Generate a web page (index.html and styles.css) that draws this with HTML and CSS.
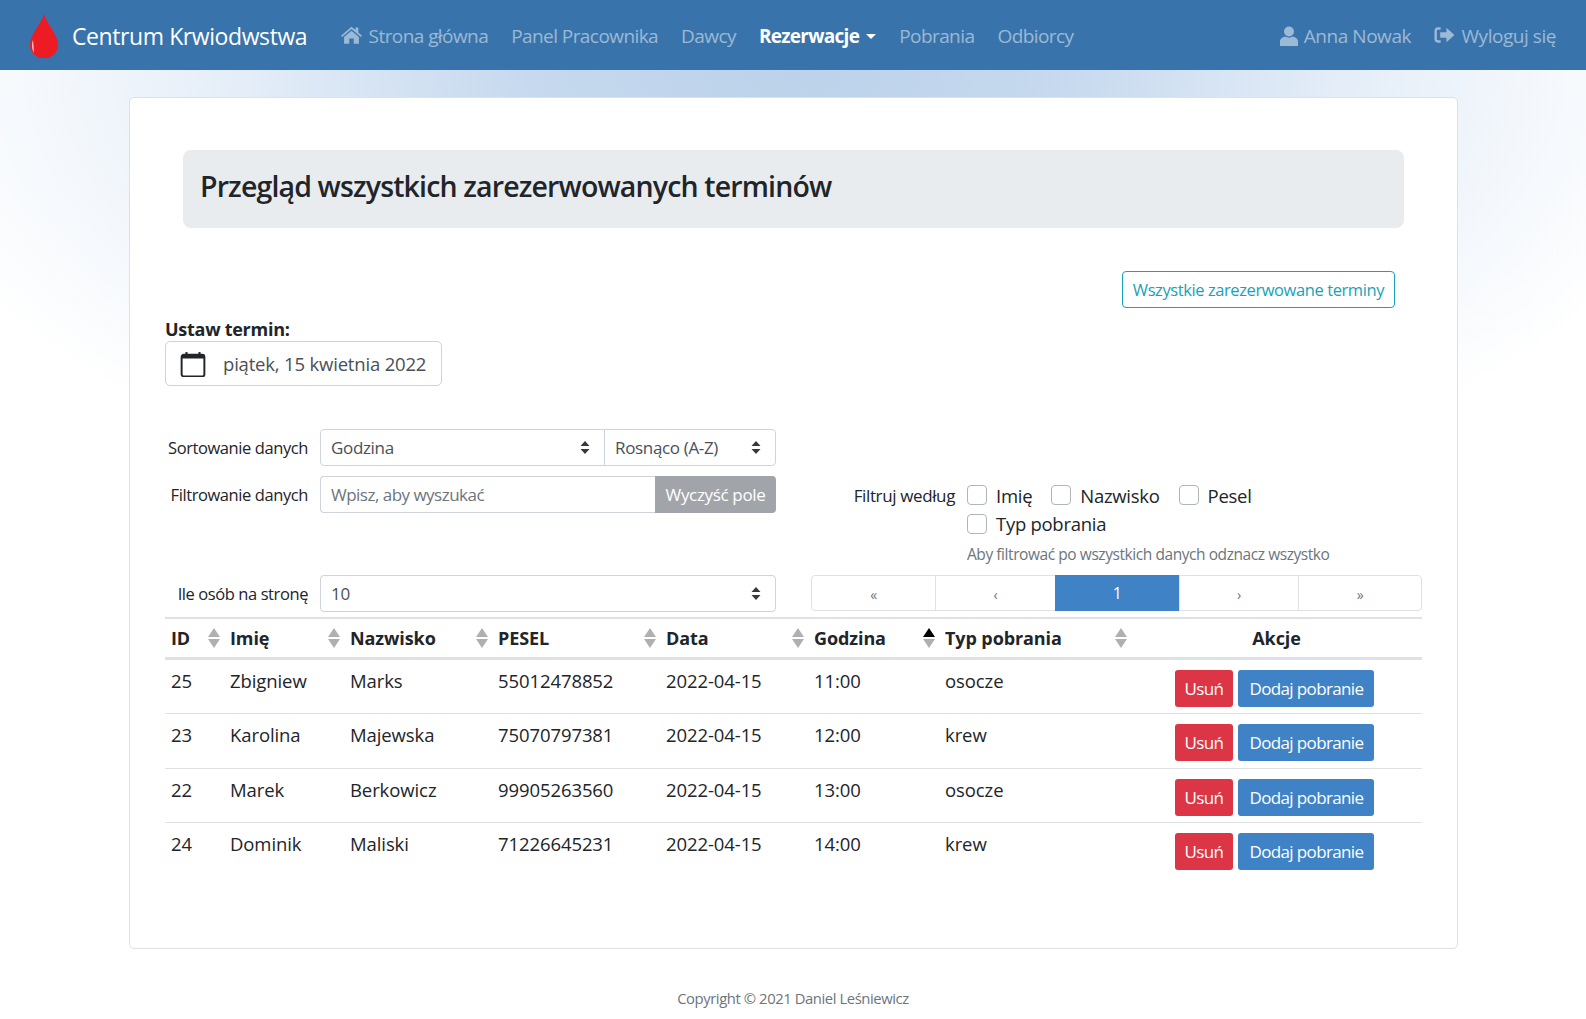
FILE: index.html
```html
<!DOCTYPE html>
<html lang="pl">
<head>
<meta charset="utf-8">
<title>Centrum Krwiodawstwa</title>
<link rel="stylesheet" href="styles.css">
</head>
<body>
<nav class="navbar">
  <a class="brand">
    <svg class="drop" viewBox="0 0 28 44"><path d="M14 0C16 9 28 20 28 31A14 13.500 0 0 1 0 31C0 20 12 9 14 0Z" fill="#ed1c24"/><path d="M3 26C1.500 30 2 36 4 38.500C3.500 34 3.500 30 3 26Z" fill="#fbd0d0"/></svg>
    <span>Centrum Krwiodwstwa</span>
  </a>
  <ul class="nav-links">
    <li><svg class="ico" viewBox="0 0 24 20"><path d="M12 0.500L0 10.800 1.300 12.300 12 3.200 22.700 12.300 24 10.800 19.800 7.200V1.500H16.500V4.400ZM12 5 3.500 12.200V20H9.500V14H14.500V20H20.500V12.200Z"/></svg> Strona główna</li>
    <li>Panel Pracownika</li>
    <li>Dawcy</li>
    <li class="active">Rezerwacje<i class="caret"></i></li>
    <li>Pobrania</li>
    <li>Odbiorcy</li>
  </ul>
  <ul class="nav-links nav-right">
    <li><svg class="ico user" viewBox="0 0 18 20"><circle cx="9" cy="5.500" r="5"/><path d="M0 20V15.500C0 12.500 3 11 5.500 10.500 7.500 12 10.500 12 12.500 10.500 15 11 18 12.500 18 15.500V20Z"/></svg> Anna Nowak</li>
    <li><svg class="ico" viewBox="0 0 22 18"><path d="M7 1H4C1.800 1 0.500 2.500 0.500 4.500V13.500C0.500 15.500 1.800 17 4 17H7V14.500H4.200C3.500 14.500 3 14 3 13.300V4.700C3 4 3.500 3.500 4.200 3.500H7Z"/><path d="M13 1.500 21.500 9 13 16.500V12H6.500V6H13Z"/></svg> Wyloguj się</li>
  </ul>
</nav>
<main class="main">
  <section class="card">
    <header class="jumbotron"><h2>Przegląd wszystkich zarezerwowanych terminów</h2></header>
    <div class="all-row"><a class="btn-outline">Wszystkie zarezerwowane terminy</a></div>
    <div class="date-block">
      <label class="date-label">Ustaw termin:</label>
      <div class="date-box">
        <svg class="cal" viewBox="0 0 24 24"><path d="M1.500 5.500A2 2 0 0 1 3.500 3.500H20.500A2 2 0 0 1 22.500 5.500V21.500A2 2 0 0 1 20.500 23.500H3.500A2 2 0 0 1 1.500 21.500Z" fill="none" stroke="#212529" stroke-width="1.800"/><path d="M1.500 5.500A2 2 0 0 1 3.500 3.500H20.500A2 2 0 0 1 22.500 5.500V7H1.500Z" fill="#212529"/><rect x="5" y="1" width="2" height="4" fill="#212529"/><rect x="17" y="1" width="2" height="4" fill="#212529"/></svg>
        <span>piątek, 15 kwietnia 2022</span>
      </div>
    </div>
    <div class="controls">
      <div class="controls-left">
        <div class="field">
          <label>Sortowanie danych</label>
          <div class="group">
            <div class="sel sel-grow">Godzina</div>
            <div class="sel sel-order">Rosnąco (A-Z)</div>
          </div>
        </div>
        <div class="field">
          <label>Filtrowanie danych</label>
          <div class="group">
            <div class="input">Wpisz, aby wyszukać</div>
            <div class="btn-clear">Wyczyść pole</div>
          </div>
        </div>
      </div>
      <div class="controls-right">
        <label class="filter-label">Filtruj według</label>
        <div class="filter-body">
          <div class="checks">
            <span class="check"><i></i>Imię</span>
            <span class="check"><i></i>Nazwisko</span>
            <span class="check"><i></i>Pesel</span>
            <span class="check"><i></i>Typ pobrania</span>
          </div>
          <small class="hint">Aby filtrować po wszystkich danych odznacz wszystko</small>
        </div>
      </div>
    </div>
    <div class="pager-row">
      <div class="field">
        <label>Ile osób na stronę</label>
        <div class="group"><div class="sel sel-grow solo">10</div></div>
      </div>
      <ul class="pager">
        <li>«</li><li>‹</li><li class="on">1</li><li>›</li><li>»</li>
      </ul>
    </div>
    <table class="data">
      <colgroup><col class="c1"><col class="c2"><col class="c3"><col class="c4"><col class="c5"><col class="c6"><col class="c7"><col></colgroup>
      <thead>
        <tr>
          <th class="sort">ID</th><th class="sort">Imię</th><th class="sort">Nazwisko</th><th class="sort">PESEL</th><th class="sort">Data</th><th class="sort">Godzina</th><th class="sort">Typ pobrania</th><th class="akcje">Akcje</th>
        </tr>
      </thead>
      <tbody>
        <tr><td>25</td><td>Zbigniew</td><td>Marks</td><td>55012478852</td><td>2022-04-15</td><td>11:00</td><td>osocze</td><td class="acts"><a class="btn red">Usuń</a><a class="btn blue">Dodaj pobranie</a></td></tr>
        <tr><td>23</td><td>Karolina</td><td>Majewska</td><td>75070797381</td><td>2022-04-15</td><td>12:00</td><td>krew</td><td class="acts"><a class="btn red">Usuń</a><a class="btn blue">Dodaj pobranie</a></td></tr>
        <tr><td>22</td><td>Marek</td><td>Berkowicz</td><td>99905263560</td><td>2022-04-15</td><td>13:00</td><td>osocze</td><td class="acts"><a class="btn red">Usuń</a><a class="btn blue">Dodaj pobranie</a></td></tr>
        <tr><td>24</td><td>Dominik</td><td>Maliski</td><td>71226645231</td><td>2022-04-15</td><td>14:00</td><td>krew</td><td class="acts"><a class="btn red">Usuń</a><a class="btn blue">Dodaj pobranie</a></td></tr>
      </tbody>
    </table>
  </section>
</main>
<footer class="foot">Copyright © 2021 Daniel Leśniewicz</footer>
</body>
</html>
```
FILE: styles.css
```css
* { box-sizing: border-box; }
html, body { margin: 0; height: 100%; }
body {
  font-family: "Open Sans", "Noto Sans", sans-serif;
  font-size: 16.500px;
  letter-spacing: -0.025em;
  color: #212529;
  background: radial-gradient(ellipse 830px 420px at 50% 70px, #bbd2ea 0%, #c6d9ee 32%, #e4edf8 66%, #f3f7fc 88%, #fff 112%) no-repeat, #fff;
  height: 1019px;
  overflow: hidden;
}
ul { list-style: none; margin: 0; padding: 0; }
.navbar {
  height: 70px;
  background: #3873ab;
  display: flex;
  align-items: center;
  padding: 2px 30px 0;
  font-size: 19px;
  letter-spacing: -0.03em;
}
.brand { display: flex; align-items: center; color: #fff; font-size: 23px; margin-right: 34px; letter-spacing: -0.018em; }
.drop { width: 28px; height: 44px; margin-right: 14px; }
.nav-links { display: flex; gap: 23px; color: rgba(255,255,255,.5); }
.nav-links .active { color: #fff; font-weight: 700; letter-spacing: -0.038em; }
.nav-right { margin-left: auto; letter-spacing: -0.024em; }
.ico { width: 21px; height: 18px; margin-right: 2px; fill: rgba(255,255,255,.5); vertical-align: -1px; }
.ico.user { width: 18px; height: 20px; margin-right: 1px; vertical-align: -3px; }
.caret { display: inline-block; margin-left: 7px; vertical-align: 4px; border-top: 5px solid #fff; border-left: 5px solid transparent; border-right: 5px solid transparent; }
.main { padding: 27px 128px 0 129px; }
.card { height: 852px; background: #fff; border: 1px solid #dfe1e4; border-radius: 5px; padding: 52px 35px 0; }
.jumbotron { margin: 0 18px; height: 78px; background: #e9ecef; border-radius: 8px; padding: 14px 17px; }
.jumbotron h2 { margin: 0; font-size: 28.500px; font-weight: 600; line-height: 44px; letter-spacing: -0.03em; }
.all-row { display: flex; justify-content: flex-end; padding: 43px 27px 0 0; }
.btn-outline { display: block; height: 37px; line-height: 35px; padding: 0 10px; border: 1px solid #17a2b8; border-radius: 4px; color: #17a2b8; }
.date-block { margin-top: 9px; }
.date-label { display: block; font-weight: 700; font-size: 18px; line-height: 24px; letter-spacing: -0.015em; }
.date-box { display: flex; align-items: center; width: 277px; height: 45px; border: 1px solid #ced4da; border-radius: 5px; padding: 0 14px; font-size: 18.500px; letter-spacing: -0.01em; color: #495057; }
.cal { width: 26px; height: 26px; margin-right: 17px; }
.controls { display: flex; margin-top: 43px; }
.controls-left { width: 611px; }
.field { display: flex; align-items: center; height: 37px; margin-bottom: 10px; }
.field label { width: 143px; text-align: right; margin-right: 12px; flex: none; }
.group { flex: 1; display: flex; height: 37px; font-size: 17px; letter-spacing: -0.02em; }
.sel { height: 37px; line-height: 35px; border: 1px solid #ced4da; padding: 0 10px; color: #495057; background: #fff url("data:image/svg+xml,%3Csvg xmlns='http://www.w3.org/2000/svg' width='10' height='13'%3E%3Cpath d='M5 0 9.500 5H.5ZM5 13 .5 8H9.500Z' fill='%23343a40'/%3E%3C/svg%3E") no-repeat right 14px center; }
.sel-grow { flex: 1; border-radius: 4px 0 0 4px; }
.sel-order { width: 172px; margin-left: -1px; border-radius: 0 4px 4px 0; }
.solo { border-radius: 4px; }
.input { flex: 1; height: 37px; line-height: 35px; border: 1px solid #ced4da; border-right: 0; border-radius: 4px 0 0 4px; padding: 0 10px; color: #6c757d; letter-spacing: -0.03em; }
.btn-clear { width: 121px; height: 37px; line-height: 37px; background: #a1a5aa; color: #fff; text-align: center; border-radius: 0 4px 4px 0; }
.controls-right { display: flex; margin-left: 36px; width: 570px; padding-top: 52px; }
.filter-label { width: 143px; text-align: right; margin-right: 12px; line-height: 37px; height: 37px; margin-top: -4px; font-size: 17px; letter-spacing: -0.022em; }
.filter-body { flex: 1; }
.checks { display: flex; flex-wrap: wrap; width: 340px; font-size: 18.500px; letter-spacing: -0.015em; }
.check { display: flex; align-items: center; height: 28.500px; margin-right: 19px; }
.check i { width: 20px; height: 20px; border: 1px solid #adb5bd; border-radius: 4px; margin-right: 9px; background: #fff; }
.hint { display: block; margin-top: 5px; font-size: 15.500px; letter-spacing: -0.028em; color: #6c757d; }
.pager-row { display: flex; margin-top: 10px; }
.pager-row .field { width: 612px; margin-bottom: 0; }
.pager { display: grid; grid-template-columns: 123px 120px 124px 119px 1fr; width: 612px; height: 36px; margin-left: 35px; border: 1px solid #dee2e6; border-radius: 4px; color: #6c757d; font-size: 14px; }
.pager li { display: flex; align-items: center; justify-content: center; border-left: 1px solid #dee2e6; padding-top: 3px; }
.pager li:first-child { border-left: 0; }
.pager .on { background: #3f83c6; color: #fff; font-size: 16px; border-left: 0; margin: -1px 0; padding-top: 0; }
.data { width: 100%; border-collapse: collapse; table-layout: fixed; margin-top: 5px; font-size: 18.500px; letter-spacing: -0.005em; }
.c1 { width: 59px; } .c2 { width: 120px; } .c3 { width: 148px; } .c4 { width: 168px; } .c5 { width: 148px; } .c6 { width: 131px; } .c7 { width: 192px; }
.data th { height: 40px; padding: 0 6px; border-top: 2px solid #dee2e6; border-bottom: 3px solid #dee2e6; text-align: left; font-size: 18px; font-weight: 700; background: url("data:image/svg+xml,%3Csvg xmlns='http://www.w3.org/2000/svg' width='12' height='20'%3E%3Cpath d='M6 0 12 9H0ZM6 20 0 11H12Z' fill='%23b0b0b0'/%3E%3C/svg%3E") no-repeat right 4px center; }
.data th:nth-child(6) { background-image: url("data:image/svg+xml,%3Csvg xmlns='http://www.w3.org/2000/svg' width='12' height='20'%3E%3Cpath d='M6 0 12 9H0Z' fill='%23000'/%3E%3Cpath d='M6 20 0 11H12Z' fill='%23b0b0b0'/%3E%3C/svg%3E"); }
.data th.akcje { text-align: center; background: none; }
.data td { height: 54px; padding: 8px 6px 0; vertical-align: top; border-bottom: 1px solid #dee2e6; }
.data tr:first-child td, .data tr:nth-child(2) td { height: 55px; }
.data tr:last-child td { border-bottom: 0; }
.data td.acts { text-align: center; padding: 10px 10px 0 6px; }
.btn { display: inline-block; height: 37px; line-height: 37px; padding: 0 11px; border-radius: 3px; color: #fff; font-size: 17px; letter-spacing: -0.037em; vertical-align: top; }
.btn.red { background: #dc3545; margin-right: 5px; padding: 0 10px; }
.blue { background: #3f83c6; }
.foot { text-align: center; margin-top: 39px; color: #6c757d; font-size: 14.800px; }
```
